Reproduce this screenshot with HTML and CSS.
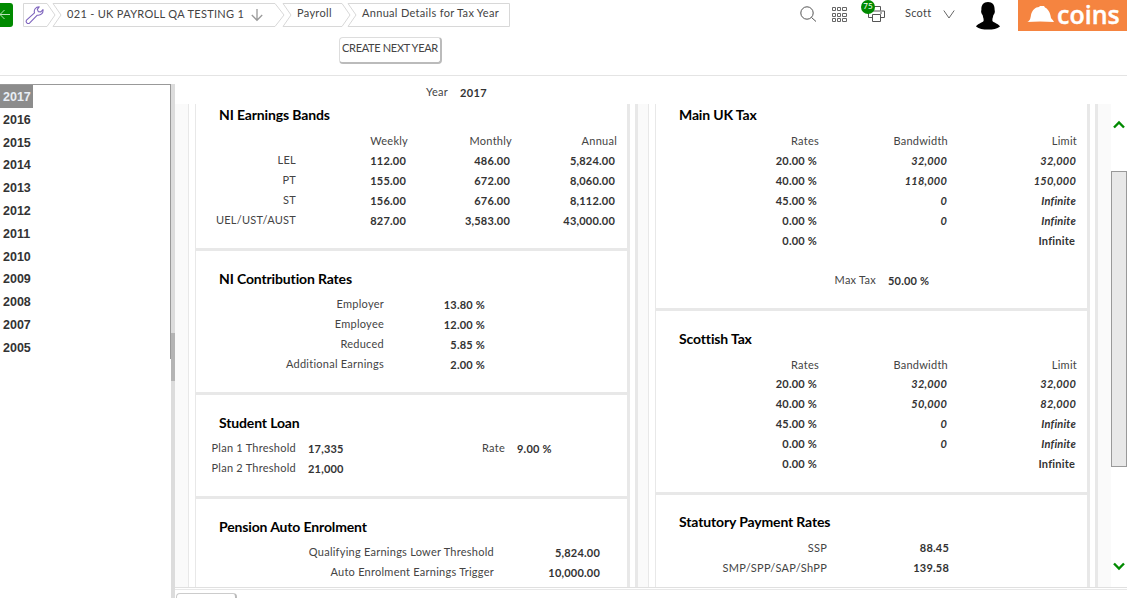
FILE: index.html
```html
<!DOCTYPE html>
<html lang="en">
<head>
<meta charset="utf-8">
<title>Annual Details for Tax Year</title>
<link rel="stylesheet" href="styles.css">
</head>
<body>
<header class="top">
  <div class="bar">
    <div class="back"><svg width="13" height="24" viewBox="0 0 13 24" fill="none" stroke="#b9e3b9"><path d="M-1 14.500H10M4.500 10L0 14.500L4.500 19" transform="translate(0 -3)"/></svg></div>
    <nav class="crumbs">
      <svg class="outline" width="488" height="24" viewBox="0 0 488 24" fill="none" stroke="#d8d8d8"><path d="M24 .5H.5v23H24M30 .5H252M30 23.500H252M260 .5H319M260 23.500H319M325 .5H486.500v23H325"/><path d="M24 .5L32 12L24 23.500M30 .5L38 12L30 23.500M252 .5L261 12L252 23.500M260 .5L268 12L260 23.500M319 .5L327 12L319 23.500M325 .5L333 12L325 23.500"/></svg>
      <span class="crumb crumb-tool"><svg width="20" height="20" viewBox="0 0 20 20" fill="none" stroke="#7d63bd" stroke-width="1.100" stroke-linejoin="round"><path d="M1.500 15.200L9.500 7.800C8.600 4.800 10.600 2 14.200 1.800L12.300 4.300L13.300 6.600L15.800 6.900L18 4.600C18.500 8.200 15.700 10.800 12.300 10.200L4.500 18.200C2.500 19.300 .3 17 1.500 15.200Z"/></svg></span>
      <span class="crumb crumb-company">021 - UK PAYROLL QA TESTING 1</span>
      <svg class="down" width="12" height="14" viewBox="0 0 12 14" fill="none" stroke="#999" stroke-width="1.300"><path d="M6 1V12M.8 7L6 12.300L11.200 7"/></svg>
      <span class="crumb crumb-module">Payroll</span>
      <span class="crumb crumb-page">Annual Details for Tax Year</span>
    </nav>
    <div class="tools">
      <svg class="search" width="17" height="17" viewBox="0 0 17 17" fill="none" stroke="#555"><circle cx="7" cy="7" r="6.200"/><path d="M11.500 11.500L16 15.500"/></svg>
      <svg class="grid" width="15" height="16" viewBox="0 0 15 16" fill="none" stroke="#666"><path d="M.5 .5h3v3h-3zM5.500 .5h3v3h-3zM10.500 .5h4v3h-4zM.5 6.500h3v3h-3zM5.500 6.500h3v3h-3zM10.500 6.500h4v3h-4zM.5 11.500h3v3h-3zM5.500 11.500h3v3h-3zM10.500 11.500h4v3h-4z"/></svg>
      <div class="printer">
        <svg width="17" height="17" viewBox="0 0 17 17" fill="none" stroke="#555"><path d="M4.500 4.500V.5h8v4M4 11.500H.5v-6.500h16v6.500H13M12 7h2"/><path d="M4.500 8.500h8v7h-8z" fill="#fff"/></svg>
        <span class="badge">75</span>
      </div>
      <span class="user">Scott</span>
      <svg class="chev" width="12" height="9" viewBox="0 0 12 9" fill="none" stroke="#666"><path d="M.8 .5L6 8L11.200 .5"/></svg>
      <svg class="avatar" width="24" height="28" viewBox="0 0 24 28"><path d="M12 0C16.500 0 18.800 3 18.600 7.500C18.600 9 19.200 8.800 18.600 11C18.300 12 17.800 12.500 17.400 13C17 15 16.600 16 16.400 17V19C18 21 22.500 21.500 24 24.500C21 27 17 27.500 12 27.500S3 27 0 24.500C1.500 21.500 6 21 7.600 19V17C7.400 16 7 15 6.600 13C6.200 12.500 5.700 12 5.400 11C4.800 8.800 5.400 9 5.400 7.500C5.200 3 7.500 0 12 0Z"/></svg>
      <div class="logo">
        <svg width="28" height="18" viewBox="0 0 28 18" fill="#fff"><path d="M0 16C3 15.500 3.500 12 4 9C5 4 8.500 1 12 1L13 0h4l1 1.500C22 3.500 23.500 8 24 12C25 13.500 26 14 27 16C18 15.200 8 15.200 0 16Z"/></svg>
        <span class="wordmark">coins</span>
      </div>
    </div>
  </div>
  <button class="create">CREATE NEXT YEAR</button>
</header>
<main class="main">
  <div class="side">
    <ul class="years">
      <li class="on">2017</li><li>2016</li><li>2015</li><li>2014</li><li>2013</li><li>2012</li><li>2011</li><li>2010</li><li>2009</li><li>2008</li><li>2007</li><li>2005</li>
    </ul>
  </div>
  <div class="splitter"><div class="handle"></div></div>
  <section class="detail">
    <div class="year-row"><span class="label">Year</span><b>2017</b></div>
    <div class="scroll">
      <div class="gutter wide"></div>
      <div class="column">
        <article class="card bands">
          <h2>NI Earnings Bands</h2>
          <div class="row head"><span></span><span>Weekly</span><span>Monthly</span><span>Annual</span></div>
          <div class="row"><span>LEL</span><b>112.00</b><b>486.00</b><b>5,824.00</b></div>
          <div class="row"><span>PT</span><b>155.00</b><b>672.00</b><b>8,060.00</b></div>
          <div class="row"><span>ST</span><b>156.00</b><b>676.00</b><b>8,112.00</b></div>
          <div class="row"><span>UEL/UST/AUST</span><b>827.00</b><b>3,583.00</b><b>43,000.00</b></div>
        </article>
        <article class="card rates">
          <h2>NI Contribution Rates</h2>
          <div class="row"><span>Employer</span><b>13.80 %</b></div>
          <div class="row"><span>Employee</span><b>12.00 %</b></div>
          <div class="row"><span>Reduced</span><b>5.85 %</b></div>
          <div class="row"><span>Additional Earnings</span><b>2.00 %</b></div>
        </article>
        <article class="card loan">
          <h2>Student Loan</h2>
          <div class="row"><span>Plan 1 Threshold</span><b class="left">17,335</b><span>Rate</span><b class="left">9.00 %</b></div>
          <div class="row"><span>Plan 2 Threshold</span><b class="left">21,000</b></div>
        </article>
        <article class="card pension">
          <h2>Pension Auto Enrolment</h2>
          <div class="row"><span>Qualifying Earnings Lower Threshold</span><b>5,824.00</b></div>
          <div class="row"><span>Auto Enrolment Earnings Trigger</span><b>10,000.00</b></div>
        </article>
      </div>
      <div class="edge"></div>
      <div class="gutter"></div>
      <div class="column">
        <article class="card tax main-tax">
          <h2>Main UK Tax</h2>
          <div class="row head"><span>Rates</span><span>Bandwidth</span><span>Limit</span></div>
          <div class="row"><b>20.00 %</b><b><i>32,000</i></b><b><i>32,000</i></b></div>
          <div class="row"><b>40.00 %</b><b><i>118,000</i></b><b><i>150,000</i></b></div>
          <div class="row"><b>45.00 %</b><b><i>0</i></b><b><i>Infinite</i></b></div>
          <div class="row"><b>0.00 %</b><b><i>0</i></b><b><i>Infinite</i></b></div>
          <div class="row"><b>0.00 %</b><b></b><b>Infinite</b></div>
          <div class="row max"><span>Max Tax</span><b class="left">50.00 %</b></div>
        </article>
        <article class="card tax scottish">
          <h2>Scottish Tax</h2>
          <div class="row head"><span>Rates</span><span>Bandwidth</span><span>Limit</span></div>
          <div class="row"><b>20.00 %</b><b><i>32,000</i></b><b><i>32,000</i></b></div>
          <div class="row"><b>40.00 %</b><b><i>50,000</i></b><b><i>82,000</i></b></div>
          <div class="row"><b>45.00 %</b><b><i>0</i></b><b><i>Infinite</i></b></div>
          <div class="row"><b>0.00 %</b><b><i>0</i></b><b><i>Infinite</i></b></div>
          <div class="row"><b>0.00 %</b><b></b><b>Infinite</b></div>
        </article>
        <article class="card statutory">
          <h2>Statutory Payment Rates</h2>
          <div class="row"><span>SSP</span><b>88.45</b></div>
          <div class="row"><span>SMP/SPP/SAP/ShPP</span><b>139.58</b></div>
        </article>
      </div>
      <div class="edge"></div>
      <div class="tail"></div>
      <div class="scrollbar">
        <svg width="12" height="9" viewBox="0 0 12 9" fill="none" stroke="#008a00" stroke-width="2.400"><path d="M1 7.500L6 2.500L11 7.500"/></svg>
        <div class="thumb"></div>
        <svg width="12" height="9" viewBox="0 0 12 9" fill="none" stroke="#008a00" stroke-width="2.400"><path d="M1 1.500L6 6.500L11 1.500"/></svg>
      </div>
    </div>
    <footer class="foot"><div class="foot-btn"></div></footer>
  </section>
</main>
</body>
</html>
```

FILE: styles.css
```css
* { box-sizing: border-box; }
body {
  margin: 0;
  width: 1127px;
  height: 598px;
  overflow: hidden;
  display: flex;
  flex-direction: column;
  background: #fff;
  color: #444;
  font: 11px/20px Lato, sans-serif;
  letter-spacing: .25px;
}
svg { display: block; flex: none; }
b { color: #333; letter-spacing: .2px; }

.top { height: 76px; flex: none; border-bottom: 1px solid #e4e4e4; }
.bar { display: flex; align-items: flex-start; height: 37px; }
.back { width: 13px; height: 24px; margin-top: 3px; background: #008a00; border-radius: 0 3px 3px 0; }
.crumbs { position: relative; display: flex; align-items: flex-start; width: 488px; height: 24px; margin: 3px 0 0 10px; white-space: nowrap; }
.outline { position: absolute; left: 0; top: 0; }
.crumb { letter-spacing: .31px; }
.crumb-tool { width: 44px; padding: 2px 0 0 2px; }
.crumb-company { width: 184px; padding-top: 1px; }
.down { margin-top: 5px; width: 12px; }
.crumb-module { width: 65px; margin-left: 34px; }
.tools { display: flex; align-items: flex-start; flex: 1; }
.search { margin: 6px 0 0 290px; }
.grid { margin: 7px 0 0 15px; }
.printer { position: relative; margin: 6px 0 0 21px; }
.badge { position: absolute; left: -7px; top: -6px; width: 14px; height: 14px; border-radius: 50%; background: #008a00; color: #fff; font-size: 8px; line-height: 13px; letter-spacing: 0; text-align: center; }
.user { width: 38px; margin: 3px 0 0 20px; }
.chev { margin-top: 10px; }
.avatar { margin: 2px 0 0 21px; }
.logo { display: flex; width: 109px; height: 31px; margin-left: 18px; padding-left: 9px; background: #f58440; color: #fff; }
.logo svg { margin-top: 6px; }
.wordmark { margin-left: 2px; font: 600 25px/28px "Open Sans", sans-serif; letter-spacing: 0; -webkit-text-stroke: .4px #fff; }
.create { display: block; width: 103px; height: 27px; margin-left: 339px; padding: 0 0 4px; border: 1px solid #ccc; border-width: 1px 2px 2px 1px; border-color: #ddd #bbb #bbb #ddd; border-radius: 4px; background: #fff; color: #444; font: 11px/20px Lato, sans-serif; letter-spacing: -.32px; white-space: nowrap; }

.main { display: flex; flex: 1; padding-top: 8px; }
.side { width: 171px; height: 275px; border: 1px solid #999; border-width: 1px 1px 0 0; }
.years { display: flex; flex-direction: column; align-items: flex-start; margin: 0; padding: 0; list-style: none; font: bold 12.500px/24px "Liberation Sans", sans-serif; letter-spacing: 0; color: #333; }
.years li { height: 22.800px; padding: 0 2px 0 3px; }
.years .on { background: #8c8c8c; color: #e9eef5; }
.splitter { width: 4px; padding-top: 249px; background: #dcdcdc; }
.handle { height: 48px; background: #b4b4b4; }

.detail { flex: 1; display: flex; flex-direction: column; }
.year-row { display: flex; height: 20px; line-height: 16px; padding-left: 251px; gap: 12px; }
.year-row b { line-height: 18px; letter-spacing: .35px; }
.scroll { display: flex; height: 483px; overflow: hidden; }
.gutter { width: 11px; border-right: 1px solid #e8e8e8; background: #fafafa; }
.gutter.wide { width: 14px; }
.column { width: 435px; margin-left: 6px; border-left: 1px solid #e8e8e8; border-right: 3px solid #e8e8e8; }
.edge { width: 8px; border-right: 3px solid #e8e8e8; }
.tail { width: 13px; background: #fafafa; }

.card { border-bottom: 3px solid #e8e8e8; padding-top: 18px; height: 144px; }
.card h2 { margin: 0 0 5px 23px; color: #000; font: bold 14px/20px Lato, sans-serif; letter-spacing: -.14px; }
.row { display: grid; height: 20px; white-space: nowrap; text-align: right; }
.row b { padding: 1px 2px 0 0; }
.row .left { text-align: left; }
.bands { height: 147px; padding-top: 1px; }
.bands .row { grid-template-columns: 100px 112px 104px 105px; }
.bands .head, .main-tax .head { margin: 6px 0 -1px; }
.rates .row { grid-template-columns: 188px 103px; }
.loan { height: 104px; }
.loan .row { grid-template-columns: 100px 97px 112px 60px; }
.loan .left { padding-left: 12px; }
.pension .row { grid-template-columns: 298px 108px; }
.tax .row { grid-template-columns: 163px 129px 129px; }
.main-tax { height: 207px; padding-top: 1px; }
.tax .max { grid-template-columns: 220px 100px; margin-top: 20px; }
.tax .max .left { padding-left: 12px; }
.tax i { margin-right: -1px; }
.scottish { height: 184px; }
.scottish .head { margin: 6px 0 -2px; }
.statutory { padding-top: 17px; }
.statutory h2 { margin-bottom: 6px; }
.statutory .row { grid-template-columns: 171px 124px; }
.statutory .row b { padding-top: 0; }

.scrollbar { display: flex; flex-direction: column; align-items: center; width: 16px; padding-top: 16px; }
.thumb { width: 16px; height: 296px; margin: 42px 0 95px; border: 1px solid #999; background: #e8e8e8; }
.foot { flex: 1; border-top: 1px solid #e0e0e0; padding: 5px 0 0 1px; background: linear-gradient(#e8e8e8, #e8e8e8) 0 1px / 100% 1px no-repeat; }
.foot-btn { width: 61px; height: 10px; border: 1px solid #ccc; border-right: 2px solid #bbb; border-radius: 4px 4px 0 0; }
```
